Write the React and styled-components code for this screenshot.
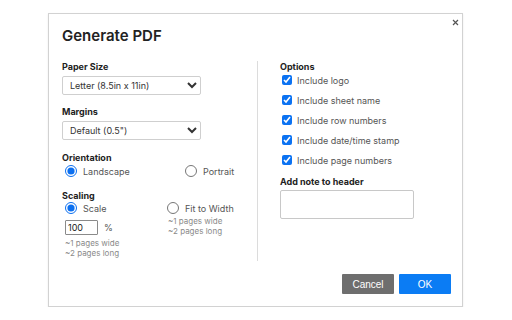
import React from "react";
import styled, { createGlobalStyle } from "styled-components";

const Global = createGlobalStyle`
  html, body { margin: 0; padding: 0; background: #fff; }
  body { font-family: Inter, "Noto Sans", sans-serif; }
  * { box-sizing: border-box; }
`;

const Page = styled.div`
  padding: 13px 0 0 48px;
`;

const Dialog = styled.div`
  position: relative;
  width: 415px;
  height: 294px;
  border: 1px solid #d2d2d2;
  background: #fff;
  box-shadow: 0 1px 2px rgba(0, 0, 0, 0.08);
  display: flex;
  flex-direction: column;
  padding: 12px 11px 12px 13px;
`;

const Close = styled.button`
  position: absolute;
  top: 2px;
  right: 1px;
  width: 12px;
  height: 12px;
  border: 0;
  padding: 0;
  background: transparent;
  display: flex;
  align-items: center;
  justify-content: center;
  cursor: pointer;
`;

const Title = styled.h1`
  margin: 0;
  font-size: 15px;
  line-height: 20px;
  font-weight: 600;
  color: #222;
  letter-spacing: 0;
`;

const Body = styled.div`
  display: flex;
  margin-top: 15px;
`;

const LeftCol = styled.div`
  width: 195px;
  display: flex;
  flex-direction: column;
`;

const Divider = styled.div`
  width: 1px;
  height: 200px;
  background: #dcdcdc;
`;

const RightCol = styled.div`
  padding-left: 22px;
  display: flex;
  flex-direction: column;
`;

const Label = styled.div`
  font-size: 9px;
  line-height: 12px;
  font-weight: 700;
  color: #222;
  margin-top: ${(p) => p.$top || 0}px;
`;

const Select = styled.select`
  margin-top: 3px;
  width: 139px;
  height: 19px;
  border: 1px solid #cfcfcf;
  border-radius: 2px;
  background: #fff;
  font-family: Inter, "Noto Sans", sans-serif;
  font-size: 9px;
  color: #333;
  padding: 0 2px 0 3px;
  outline: none;
`;

const RadioRow = styled.div`
  display: grid;
  grid-template-columns: ${(p) => p.$first}px auto;
  padding-left: 3px;
  margin-top: ${(p) => p.$top || 0}px;
`;

const Option = styled.label`
  display: flex;
  align-items: center;
  gap: 6px;
  height: 14px;
  font-size: 9px;
  color: #555;
`;

const Radio = styled.input.attrs({ type: "radio" })`
  width: 12px;
  height: 12px;
  margin: 0;
  accent-color: #0b6ff0;
`;

const SubCol = styled.div`
  display: flex;
  flex-direction: column;
`;

const ScaleRow = styled.div`
  display: flex;
  align-items: center;
  gap: 6px;
  margin-top: 5px;
`;

const NumInput = styled.input`
  width: 33px;
  height: 15px;
  border: 1px solid #8a8a8a;
  border-radius: 1px;
  font-family: Inter, "Noto Sans", sans-serif;
  font-size: 9px;
  color: #222;
  padding: 0 2px;
  outline: none;
`;

const Unit = styled.span`
  font-size: 9px;
  color: #555;
`;

const Hint = styled.div`
  font-size: 8px;
  line-height: 10px;
  color: #8a8a8a;
  margin-top: ${(p) => p.$top || 0}px;
  padding-left: ${(p) => p.$left || 0}px;
`;

const CheckList = styled.div`
  display: flex;
  flex-direction: column;
  margin-top: -3px;
`;

const CheckRow = styled.label`
  display: flex;
  align-items: center;
  gap: 5px;
  height: 20px;
  padding-left: 2px;
  font-size: 9px;
  color: #555;
`;

const Checkbox = styled.input.attrs({ type: "checkbox" })`
  width: 10px;
  height: 10px;
  margin: 0;
  accent-color: #0b72f2;
`;

const NoteArea = styled.textarea`
  margin-top: 2px;
  width: 134px;
  height: 29px;
  border: 1px solid #c8c8c8;
  border-radius: 2px;
  resize: none;
  outline: none;
`;

const Footer = styled.div`
  margin-top: auto;
  display: flex;
  justify-content: flex-end;
  gap: 5px;
`;

const Button = styled.button`
  width: 52px;
  height: 20px;
  border: 0;
  border-radius: 1px;
  font-family: "Liberation Sans", Arial, sans-serif;
  font-size: 10px;
  color: #fff;
  background: ${(p) => (p.$primary ? "#0b7cf4" : "#6e6e6e")};
  cursor: pointer;
`;

const options = [
  "Include logo",
  "Include sheet name",
  "Include row numbers",
  "Include date/time stamp",
  "Include page numbers",
];

export default function App() {
  return (
    <Page>
      <Global />
      <Dialog>
        <Close aria-label="Close">
          <svg width="7" height="7" viewBox="0 0 7 7">
            <path d="M1 1L6 6M6 1L1 6" stroke="#555" strokeWidth="1.2" />
          </svg>
        </Close>
        <Title>Generate PDF</Title>
        <Body>
          <LeftCol>
            <Label>Paper Size</Label>
            <Select defaultValue="letter">
              <option value="letter">Letter (8.5in x 11in)</option>
            </Select>
            <Label $top={11}>Margins</Label>
            <Select defaultValue="default">
              <option value="default">Default (0.5")</option>
            </Select>
            <Label $top={12}>Orientation</Label>
            <RadioRow $first={120} $top={0}>
              <Option>
                <Radio name="orient" defaultChecked />
                Landscape
              </Option>
              <Option>
                <Radio name="orient" />
                Portrait
              </Option>
            </RadioRow>
            <Label $top={12}>Scaling</Label>
            <RadioRow $first={102} $top={-1}>
              <SubCol>
                <Option>
                  <Radio name="scale" defaultChecked />
                  Scale
                </Option>
                <ScaleRow>
                  <NumInput defaultValue="100" />
                  <Unit>%</Unit>
                </ScaleRow>
                <Hint $top={3}>~1 pages wide</Hint>
                <Hint>~2 pages long</Hint>
              </SubCol>
              <SubCol>
                <Option>
                  <Radio name="scale" />
                  Fit to Width
                </Option>
                <Hint $top={1} $left={1}>~1 pages wide</Hint>
                <Hint $left={1}>~2 pages long</Hint>
              </SubCol>
            </RadioRow>
          </LeftCol>
          <Divider />
          <RightCol>
            <Label>Options</Label>
            <CheckList>
              {options.map((o) => (
                <CheckRow key={o}>
                  <Checkbox defaultChecked />
                  {o}
                </CheckRow>
              ))}
            </CheckList>
            <Label $top={6}>Add note to header</Label>
            <NoteArea />
          </RightCol>
        </Body>
        <Footer>
          <Button>Cancel</Button>
          <Button $primary>OK</Button>
        </Footer>
      </Dialog>
    </Page>
  );
}
